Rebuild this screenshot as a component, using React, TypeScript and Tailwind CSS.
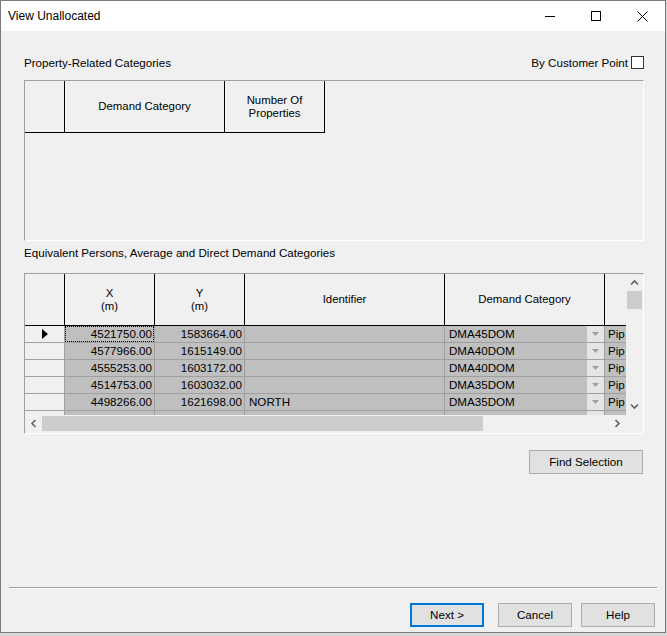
interface Row {
  x: string;
  y: string;
  id: string;
  cat: string;
}

const rows: Row[] = [
  { x: "4521750.00", y: "1583664.00", id: "", cat: "DMA45DOM" },
  { x: "4577966.00", y: "1615149.00", id: "", cat: "DMA40DOM" },
  { x: "4555253.00", y: "1603172.00", id: "", cat: "DMA40DOM" },
  { x: "4514753.00", y: "1603032.00", id: "", cat: "DMA35DOM" },
  { x: "4498266.00", y: "1621698.00", id: "NORTH", cat: "DMA35DOM" },
  { x: "4545110.00", y: "1593480.00", id: "", cat: "DMA40DOM" },
];

const font = { fontFamily: '"Liberation Sans", Arial, sans-serif' };

function HeaderCell({ w, children }: { w: string; children?: React.ReactNode }) {
  return (
    <div
      className={`${w} shrink-0 h-full border-r border-black flex items-center justify-center text-center text-[11.4px] leading-[13px] text-black`}
    >
      {children}
    </div>
  );
}

function DropTriangle() {
  return (
    <svg width="7" height="4" viewBox="0 0 7 4">
      <path d="M0 0h7L3.5 4z" fill="#a0a0a0" />
    </svg>
  );
}

// scrollbar arrow, pointing up by default
function Arrow({ rotate }: { rotate: string }) {
  return (
    <svg width="9" height="9" viewBox="0 0 9 9" className={rotate}>
      <path d="M1 6.5L4.5 3 8 6.5" fill="none" stroke="#606060" strokeWidth="1.6" />
    </svg>
  );
}

export default function App() {
  return (
    <div className="w-[667px] h-[636px] bg-[#d8d8d8] overflow-hidden" style={font}>
      <div className="w-[666px] h-[633px] border border-[#7a7a7a] bg-[#f0f0f0] flex flex-col">
        {/* title bar */}
        <div className="h-[30px] bg-white flex items-center shrink-0">
          <span className="ml-[7px] text-[12px] text-black">View Unallocated</span>
          <div className="ml-auto flex items-center h-full">
            <div className="w-[46px] h-full flex items-center justify-center">
              <div className="w-[10px] h-px bg-black" />
            </div>
            <div className="w-[46px] h-full flex items-center justify-center">
              <div className="w-[10px] h-[10px] border border-black" />
            </div>
            <div className="w-[46px] h-full flex items-center justify-center">
              <svg width="11" height="11" viewBox="0 0 11 11">
                <path d="M0.5 0.5l10 10M10.5 0.5l-10 10" stroke="#000" strokeWidth="1" />
              </svg>
            </div>
          </div>
        </div>

        <div className="flex-1 flex flex-col pl-[23px] pr-[21px]">
          {/* section 1 label */}
          <div className="mt-[24px] h-[15px] flex items-center text-[11.6px] text-black">
            <span>Property-Related Categories</span>
            <span className="ml-auto">By Customer Point</span>
            <div className="ml-[3px] w-[13px] h-[13px] border border-[#333] bg-white" />
          </div>

          {/* grid 1 */}
          <div className="mt-[10px] h-[161px] border-t border-l border-[#a0a0a0] border-b border-r border-b-white border-r-white">
            <div className="h-[52px] flex border-b border-black w-[300px]">
              <HeaderCell w="w-[40px]" />
              <HeaderCell w="w-[160px]">Demand Category</HeaderCell>
              <HeaderCell w="w-[100px]">
                Number Of
                <br />
                Properties
              </HeaderCell>
            </div>
          </div>

          {/* section 2 label */}
          <div className="mt-[4px] h-[15px] flex items-center text-[11.6px] text-black">
            Equivalent Persons, Average and Direct Demand Categories
          </div>

          {/* grid 2 */}
          <div className="mt-[13px] h-[161px] border-t border-l border-[#a0a0a0] border-b border-r border-b-white border-r-white flex flex-col">
            <div className="flex h-[141px]">
              <div className="w-[601px] overflow-hidden">
                <div className="h-[52px] flex border-b border-black w-[640px]">
                  <HeaderCell w="w-[40px]" />
                  <HeaderCell w="w-[90px]">
                    X
                    <br />
                    (m)
                  </HeaderCell>
                  <HeaderCell w="w-[90px]">
                    Y
                    <br />
                    (m)
                  </HeaderCell>
                  <HeaderCell w="w-[200px]">Identifier</HeaderCell>
                  <HeaderCell w="w-[160px]">Demand Category</HeaderCell>
                  <HeaderCell w="w-[60px]" />
                </div>
                {rows.map((r, i) => (
                  <div key={i} className="flex h-[17px] w-[640px] text-[11.6px] text-black">
                    <div className="w-[40px] shrink-0 border-r border-b border-[#a0a0a0] bg-[#f0f0f0] flex items-center justify-center">
                      {i === 0 && (
                        <svg width="6" height="10" viewBox="0 0 6 10">
                          <path d="M0 0l6 5-6 5z" fill="#000" />
                        </svg>
                      )}
                    </div>
                    <div className="w-[90px] shrink-0 border-r border-b border-[#a0a0a0] bg-[#bfbfbf] flex">
                      <div
                        className={`flex-1 flex items-center justify-end pr-[1px] ${
                          i === 0 ? "border border-dotted border-black" : "border border-transparent"
                        }`}
                      >
                        {r.x}
                      </div>
                    </div>
                    <div className="w-[90px] shrink-0 border-r border-b border-[#a0a0a0] bg-[#bfbfbf] flex items-center justify-end pr-[2px]">
                      {r.y}
                    </div>
                    <div className="w-[200px] shrink-0 border-r border-b border-[#a0a0a0] bg-[#bfbfbf] flex items-center pl-[4px]">
                      {r.id}
                    </div>
                    <div className="w-[160px] shrink-0 border-r border-b border-[#a0a0a0] bg-[#bfbfbf] flex items-center">
                      <span className="pl-[4px] flex-1">{r.cat}</span>
                      <div className="w-[17px] h-full bg-[#e5e5e5] flex items-center justify-center">
                        <DropTriangle />
                      </div>
                    </div>
                    <div className="w-[60px] shrink-0 border-r border-b border-[#a0a0a0] bg-[#bfbfbf] flex items-center pl-[3px]">
                      Pip
                    </div>
                  </div>
                ))}
              </div>
              {/* vertical scrollbar */}
              <div className="w-[17px] flex flex-col items-center bg-[#f0f0f0]">
                <div className="h-[17px] flex items-center justify-center">
                  <Arrow rotate="" />
                </div>
                <div className="w-[15px] h-[18px] bg-[#cdcdcd]" />
                <div className="flex-1" />
                <div className="h-[17px] flex items-center justify-center">
                  <Arrow rotate="rotate-180" />
                </div>
              </div>
            </div>
            {/* horizontal scrollbar */}
            <div className="h-[17px] flex bg-[#f0f0f0]">
              <div className="w-[17px] flex items-center justify-center">
                <Arrow rotate="-rotate-90" />
              </div>
              <div className="w-[567px] flex items-center">
                <div className="w-[441px] h-[15px] bg-[#cdcdcd]" />
              </div>
              <div className="w-[17px] flex items-center justify-center">
                <Arrow rotate="rotate-90" />
              </div>
              <div className="w-[17px]" />
            </div>
          </div>

          {/* find selection */}
          <div className="mt-[16px] flex justify-end pr-[1px]">
            <button className="w-[114px] h-[24px] bg-[#e1e1e1] border border-[#adadad] text-[11.6px] text-black">
              Find Selection
            </button>
          </div>
        </div>

        {/* footer */}
        <div className="mx-[8px] h-[2px] border-t border-[#a0a0a0] border-b border-b-white" />
        <div className="h-[43px] flex items-start justify-end pr-[10px] pt-[14px]">
          <button className="w-[74px] h-[24px] bg-[#e1e1e1] border-2 border-[#0078d7] text-[11.6px] text-black">
            Next &gt;
          </button>
          <button className="ml-[14px] w-[74px] h-[24px] bg-[#e1e1e1] border border-[#adadad] text-[11.6px] text-black">
            Cancel
          </button>
          <button className="ml-[9px] w-[74px] h-[24px] bg-[#e1e1e1] border border-[#adadad] text-[11.6px] text-black">
            Help
          </button>
        </div>
      </div>
    </div>
  );
}
